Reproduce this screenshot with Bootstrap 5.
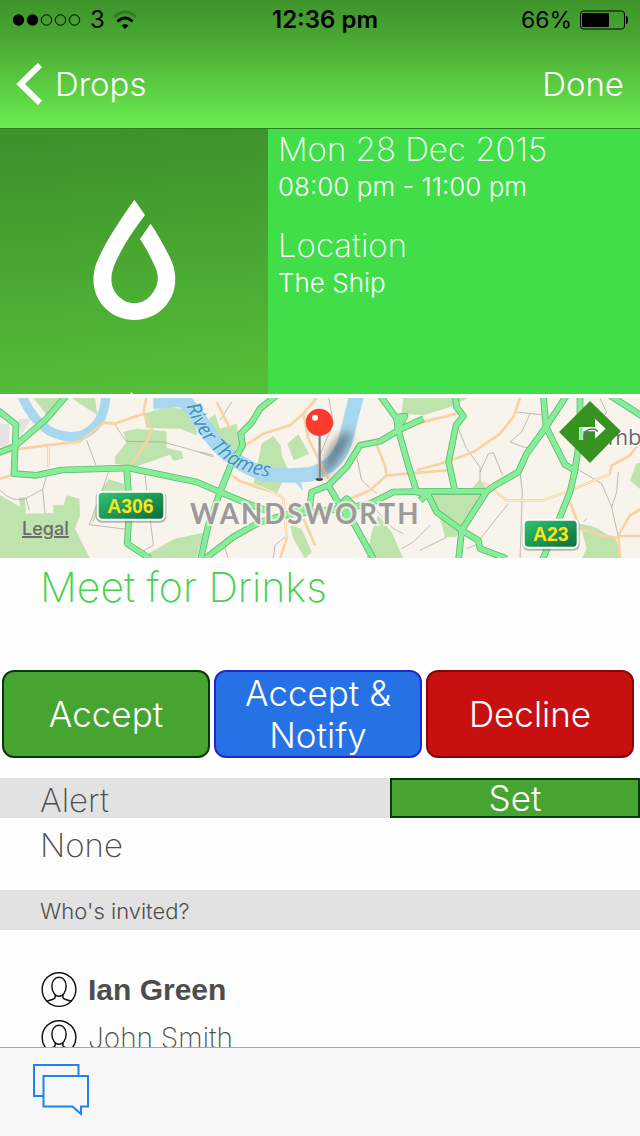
<!DOCTYPE html>
<html lang="en">
<head>
<meta charset="utf-8">
<meta name="viewport" content="width=device-width, initial-scale=1">
<title>Drops</title>
<link href="https://cdn.jsdelivr.net/npm/bootstrap@5.3.0/dist/css/bootstrap.min.css" rel="stylesheet">
<style>
  body { font-family: Inter, "Liberation Sans", sans-serif; color: #4d4d4d; background: #fefefe; }
  .top-bar { background: linear-gradient(#3e942a, #4aa933 32%, #6bed50); border-bottom: 1px solid #2b7a22; }
  .status-row { height: 40px; padding: 0 12px; color: #000; font-size: 24px; line-height: 40px; }
  .status-side { flex: 1 0 0; }
  .status-charge { font-size: 23px; }
  .status-time { padding-left: 10px; }
  .nav-row { height: 88px; padding: 0 16px; }
  .nav-link-btn { font-size: 33px; line-height: 44px; font-weight: 300; color: #fff; text-decoration: none; padding: 0; border: 0; background: none; }
  .scroller { min-height: 0; overflow: auto; scrollbar-width: none; }
  .scroller::-webkit-scrollbar { display: none; }
  .drop-tile { width: 268px; height: 265px; background: linear-gradient(175deg, #3e922a 5%, #54be39 97%); }
  .details { background: #41de4a; color: #fff; padding: 0 10px; }
  .line-lg { font-size: 33px; line-height: 40px; font-weight: 200; }
  .line-md { font-size: 26px; line-height: 36px; font-weight: 300; }
  .map-view { height: 160px; margin-top: 4px; }
  .map-view a { fill: #6b6b6b; }
  .event-title { font-size: 41px; line-height: 58px; font-weight: 200; color: #41d24a; padding: 0 40px; }
  .rsvp { padding: 54px 6px 20px 2px; gap: 4px; }
  .rsvp button { flex: 1 1 0; height: 88px; border: 2px solid; border-radius: 12px; padding: 0; color: #fff; font-size: 35px; line-height: 42px; font-weight: 300; }
  .go { background: #46a430; border-color: #083808 !important; }
  .tell { background: #2672e5; border-color: #2026d8 !important; }
  .no { background: #c81010; border-color: #8a0606 !important; }
  .strip { height: 40px; background: #e2e2e2; padding-left: 40px; }
  .set-btn { width: 250px; height: 40px; border: 2px solid #083808; color: #fff; font-size: 35px; line-height: 36px; font-weight: 300; padding: 0; }
  .label-lg { font-size: 33px; line-height: 44px; font-weight: 200; }
  .alert-value { font-size: 33px; line-height: 54px; height: 72px; padding-left: 40px; font-weight: 200; }
  .label-sm { font-size: 22px; line-height: 42px; font-weight: 300; }
  .guests { padding: 36px 40px 0; }
  .guests li { height: 48px; gap: 9px; line-height: 48px; }
  .guest-host { font-family: "Liberation Sans", Arial, sans-serif; font-size: 30px; }
  .guest-light { font-weight: 200; font-size: 28px; }
  .tool-bar { height: 89px; background: #f8f8f8; border-top: 1px solid #a9a9a9; padding: 0 32px 6px; }
</style>
</head>
<body>
<div class="d-flex flex-column vh-100 overflow-hidden">
  <header class="top-bar flex-shrink-0">
    <div class="status-row d-flex align-items-center">
      <div class="status-side d-flex align-items-center">
        <svg width="70" height="14" viewBox="0 0 70 14" aria-hidden="true">
          <circle cx="6.500" cy="7" r="5.700"/><circle cx="20.500" cy="7" r="5.700"/>
          <g fill="none" stroke="#000"><circle cx="34.500" cy="7" r="5.200"/><circle cx="48.500" cy="7" r="5.200"/><circle cx="62.500" cy="7" r="5.200"/></g>
        </svg>
        <span class="ms-2">3</span>
        <svg class="ms-2" width="24" height="20" viewBox="0 0 24 20" aria-hidden="true">
          <path d="M8.500 15.500Q12 12.500 15.500 15.500L12 19Z"/>
          <path d="M4.500 11.500Q12 4.500 19.500 11.500" fill="none" stroke="#000" stroke-width="3"/>
          <path d="M1 7Q12-3 23 7" fill="none" stroke="#2d7b20" stroke-width="3"/>
        </svg>
      </div>
      <div class="status-time fw-semibold">12:36 pm</div>
      <div class="status-side status-charge d-flex align-items-center justify-content-end">
        <span>66%</span>
        <svg class="ms-2" width="48" height="20" viewBox="0 0 48 20" aria-hidden="true">
          <rect x=".5" y="1" width="44" height="18" rx="3" fill="none" stroke="#000"/>
          <rect x="2" y="3" width="27" height="14" rx="1"/><path d="M46 6h1q2 4 0 8h-1z"/>
        </svg>
      </div>
    </div>
    <nav class="nav-row d-flex align-items-center justify-content-between">
      <a href="#" class="nav-link-btn d-flex align-items-center">
        <svg width="27" height="42" viewBox="0 0 27 42" aria-hidden="true"><path d="M24 2 4.500 21 24 40" fill="none" stroke="#fff" stroke-width="6"/></svg>
        <span class="ms-2 ps-1">Drops</span>
      </a>
      <button type="button" class="nav-link-btn">Done</button>
    </nav>
  </header>

  <main class="scroller flex-grow-1">
    <section class="d-flex">
      <div class="drop-tile flex-shrink-0">
        <svg class="d-block" width="268" height="265" viewBox="0 12 804 795" role="img" aria-label="Drop logo">
          <path fill="#fff" d="M403 224L435 270C400 317 369 361 344 418C326 462 334 494 357 515C383 541 423 541 449 515C474 488 482 456 463 421C452 396 436 366 420 342L452 296C475 331 501 376 517 414C537 472 521 519 490 550C442 597 364 597 316 550C280 515 272 463 289 415C315 352 356 291 403 224Z"/>
          <path fill="#fff" d="M394 801l4 6h-8z"/>
        </svg>
      </div>
      <div class="details flex-grow-1">
        <div class="line-lg">Mon 28 Dec 2015</div>
        <div class="line-md">08:00 pm - 11:00 pm</div>
        <div class="line-lg mt-3 pt-1">Location</div>
        <div class="line-md">The Ship</div>
      </div>
    </section>

    <svg class="map-view d-block w-100" viewBox="0 18 1920 480" preserveAspectRatio="xMidYMid slice" role="img" aria-label="Map of Wandsworth">
      <defs>
        <linearGradient id="shield" x1="0" y1="0" x2="1" y2="1"><stop offset="0" stop-color="#32c673"/><stop offset="1" stop-color="#0b6b3c"/></linearGradient>
        <filter id="soft" x="-50%" y="-50%" width="200%" height="200%"><feGaussianBlur stdDeviation="14"/></filter>
        <g id="majors">
          <path d="M-10 52L48 98L42 245L110 250L185 234L385 228L590 270L660 300L750 338L800 355"/>
          <path d="M-10 184L42 165L140 80L200 10"/>
          <path d="M380 228L388 340L382 455L450 500"/>
          <path d="M830 10L780 50L755 92L722 125L728 160L690 225L660 300L625 400L600 510"/>
          <path d="M615 500L700 435L780 390L870 365L930 340L935 300L985 280L1040 225L1080 160L1140 148L1195 115L1270 80"/>
          <path d="M1140 10L1190 80L1195 115L1225 220L1250 300L1285 310"/>
          <path d="M860 368L1030 350L1110 335L1180 300L1290 298L1460 298"/>
          <path d="M985 280L1020 340L1065 400L1120 500"/>
          <path d="M1190 75L1215 72L1195 108Z"/>
          <path d="M1365 10L1370 45L1390 72L1368 100L1346 210L1365 298"/>
          <path d="M1630 10L1638 105L1695 218L1725 235L1710 300L1680 375L1625 510"/>
          <path d="M1700 10L1638 105L1580 185L1555 240L1485 280L1460 298L1385 415L1375 510"/>
          <path d="M1285 310L1310 360L1385 415L1435 445L1440 470L1520 500"/>
          <path d="M1740 10L1740 130L1725 235"/><path d="M1830 10L1930 75"/>
          <path d="M1260 325L1290 300"/><path d="M1010 350L1040 320L1065 345L1030 380"/>
        </g>
      </defs>
      <rect y="18" width="1920" height="480" fill="#f8f4ec"/>
      <g fill="#bfe3ad">
        <path d="M0 310L60 345 58 315 75 318 78 365 160 363 160 338 190 340 200 310 238 320 240 370 225 410 270 500H0Z"/>
        <path d="M370 120L410 110 500 118V168L545 178 550 200 520 206 510 188 405 225 345 215 345 195 380 150Z"/>
        <path d="M430 65L500 45 585 55 590 130 540 110 440 108Z"/><path d="M100 18H205L145 75Z"/><path d="M215 18H285L292 70Z"/>
        <path d="M325 262L372 275 375 300 320 330 275 395 300 300Z"/>
        <path d="M435 490L525 440 610 422 590 500H440Z"/><path d="M622 85L645 65 660 110 710 95 718 160 700 180 650 135Z"/>
        <path d="M785 155L820 132 842 160 845 190 865 235 830 306 758 285Z"/><path d="M862 155L895 127 928 185 882 205Z"/>
        <path d="M870 400L905 410 935 480 915 500 880 440Z"/><path d="M1115 420L1135 370 1175 420 1210 500H1100Z"/>
        <path d="M1210 18H1405L1350 45 1270 70 1205 65Z"/><path d="M1290 305L1415 290 1440 262 1460 290 1385 415 1365 435 1335 435 1320 380Z"/>
        <path d="M1740 395L1785 405 1850 445 1860 500H1745L1760 470Z"/><path d="M1890 265L1908 215 1930 210V300Z"/>
      </g>
      <path d="M0 95h28v70H0zM55 80h40l-35 55z" fill="#e4e3e2"/>
      <g fill="none" stroke="#a7d8ef">
        <path stroke-width="28" d="M65 10Q95 80 145 115Q195 142 245 130Q315 100 317 10"/>
        <path stroke-width="44" d="M540 15Q590 60 630 130Q690 210 790 245Q860 255 930 247Q1010 225 1035 150Q1050 90 1070 10"/>
        <path fill="#a7d8ef" stroke="none" d="M460 18h105v40l-30-12-75 6zM885 270l25 27-10-35z"/>
      </g>
      <g fill="none" stroke="#9e9b97" stroke-width="2">
        <path d="M345 98L378 148 490 150 590 178 640 195M260 145L288 220M325 240L310 285 268 398 380 412M435 250L460 460 425 480M145 235L128 292 135 363M0 295Q40 335 80 318L128 292M78 318L88 355M600 180L640 190M660 85L695 30M985 10L1000 95 955 200M1065 170L1085 265 1130 305M1125 350L1180 410 1210 425M1290 400L1240 450 1205 470"/>
        <path d="M1375 110L1400 170 1440 225 1440 265M1440 240L1465 185 1480 182 1508 250M1550 60L1640 70M1590 65L1565 120 1530 150 1570 165 1600 170M1560 240L1567 300 1560 500M1525 335L1425 460 1400 470M1730 230L1805 275 1835 345 1855 435M1855 240L1850 300 1835 345M1260 475L1340 436M820 498L825 460 855 435M670 455L685 500M1800 20L1820 60 1810 75M1750 390L1760 380"/>
      </g>
      <g fill="none" stroke-linejoin="round">
        <g stroke="#f8d2a2" stroke-width="8">
          <path d="M50 172L140 160 240 148 310 92 345 95 430 65 455 110 440 150 395 215M145 160V225M430 65L440 10M0 260L35 250M650 30L690 110M740 158L790 125 870 100 910 65 950 18M910 65L925 140 985 260M690 245L720 268 820 300 850 320 860 440 840 500M910 380L945 460M1050 320L1110 295 1160 250 1340 235M1130 160L1155 220 1160 245M1200 100L1260 85"/>
          <path d="M1250 95L1370 65M1250 235L1340 210 1420 180 1500 125 1540 75 1560 18M1450 270L1520 325 1630 325 1700 300 1830 245 1835 220 1890 190 1920 150M1710 330L1740 410 1800 430 1855 438 1860 500M1855 432H1930M1855 430L1890 370 1925 350"/>
        </g>
        <path stroke="#fff1d8" stroke-width="3" d="M145 160V225M1450 270L1520 325 1630 325 1700 300 1830 245M690 245L820 300 850 320 860 440"/>
        <use href="#majors" stroke="#59bb70" stroke-width="20"/>
        <use href="#majors" stroke="#87ed98" stroke-width="15"/>
      </g>
      <path id="thames" d="M558 42Q600 155 690 215Q755 258 890 262" fill="none"/>
      <text font-family="Open Sans, sans-serif" font-size="59" font-style="italic" font-weight="500" fill="#3d8fbd" stroke="#b9e0f1" stroke-width="6" paint-order="stroke"><textPath href="#thames">River Thames</textPath></text>
      <text x="570" y="397" font-family="Lato, sans-serif" font-weight="700" font-size="83" letter-spacing="6" fill="#9c9a99" stroke="#f8f4ec" stroke-width="12" stroke-opacity=".8" paint-order="stroke">WANDSWORTH</text>
      <text x="1745" y="158" font-family="Open Sans, sans-serif" font-size="66" fill="#6d6b69" stroke="#fff" stroke-width="8" paint-order="stroke">Camb</text>
      <path d="M1770 30L1860 118L1770 210L1680 120Z" fill="#37931f" stroke="#37931f" stroke-width="4" stroke-linejoin="round"/>
      <path d="M1737 144V105H1785V80L1817 110L1785 140V118H1750V144Z" fill="#fff"/><path d="M1738 105h10v39h-10z" fill="#87ed98"/>
      <path d="M1752 142Q1751 111 1777 111Q1789 111 1793 119" fill="none" stroke="#6d6b69" stroke-width="5"/>
      <g stroke="#fff" stroke-width="6" fill="url(#shield)">
        <rect x="290" y="301" width="206" height="88" rx="15" fill="#777" stroke="#777" opacity=".5"/><rect x="293" y="299" width="200" height="84" rx="14"/>
        <rect x="1570" y="385" width="166" height="88" rx="15" fill="#777" stroke="#777" opacity=".5"/><rect x="1571" y="383" width="162" height="84" rx="14"/>
      </g>
      <g font-family="Liberation Sans, sans-serif" font-weight="700" font-size="58" fill="#fbe51d" text-anchor="middle"><text x="391" y="362">A306</text><text x="1652" y="446">A23</text></g>
      <path d="M968 230Q995 130 1055 115Q1055 165 968 260Z" opacity=".42" filter="url(#soft)"/>
      <ellipse cx="958" cy="262" rx="11" ry="5" fill="#444"/>
      <path d="M958 125V260" stroke="#777" stroke-width="8"/><path d="M956 125V258" stroke="#c9c9c9" stroke-width="3"/>
      <circle cx="958" cy="91" r="41" fill="#fb3a30"/><circle cx="945" cy="77" r="9" fill="#fff"/>
      <a href="#"><text x="66" y="429" font-family="Inter, sans-serif" font-weight="500" font-size="54" text-decoration="underline">Legal</text></a>
    </svg>

    <h1 class="event-title m-0">Meet for Drinks</h1>

    <div class="rsvp d-flex">
      <button type="button" class="go">Accept</button>
      <button type="button" class="tell">Accept &amp;<br>Notify</button>
      <button type="button" class="no">Decline</button>
    </div>

    <div class="strip d-flex justify-content-between">
      <span class="label-lg">Alert</span>
      <button type="button" class="set-btn go">Set</button>
    </div>
    <div class="alert-value">None</div>
    <h2 class="strip label-sm m-0">Who's invited?</h2>

    <svg class="d-none" aria-hidden="true"><symbol id="person" viewBox="0 0 40 40">
      <g fill="none" stroke="#111" stroke-width="1.500"><circle cx="19.500" cy="19.500" r="17.300"/>
      <path d="M19.500 7C15 7 12.200 11 12.200 16C12.200 22 15.500 26.500 19.500 26.500S26.800 22 26.800 16C26.800 11 24 7 19.500 7ZM15.500 25V28Q15 29.500 6.500 31.500M23.500 25V28Q24 29.500 32.500 31.500"/></g>
    </symbol></svg>
    <ul class="guests list-unstyled m-0">
      <li class="d-flex align-items-center"><svg width="39" height="40" aria-hidden="true"><use href="#person"/></svg><span class="guest-host fw-bold">Ian Green</span></li>
      <li class="d-flex align-items-center"><svg width="39" height="40" aria-hidden="true"><use href="#person"/></svg><span class="guest-light">John Smith</span></li>
    </ul>
  </main>

  <footer class="tool-bar d-flex align-items-center flex-shrink-0">
    <button type="button" class="btn p-0 border-0" aria-label="Messages">
      <svg class="d-block" width="58" height="54" viewBox="0 0 58 54"><path d="M11 34H2V3H46.500V13M11.500 14H56V44.500H49V52L40.500 44.500H11.500Z" fill="none" stroke="#1a84f0" stroke-width="2"/></svg>
    </button>
  </footer>
</div>
<script src="https://cdn.jsdelivr.net/npm/bootstrap@5.3.0/dist/js/bootstrap.bundle.min.js"></script>
</body>
</html>
